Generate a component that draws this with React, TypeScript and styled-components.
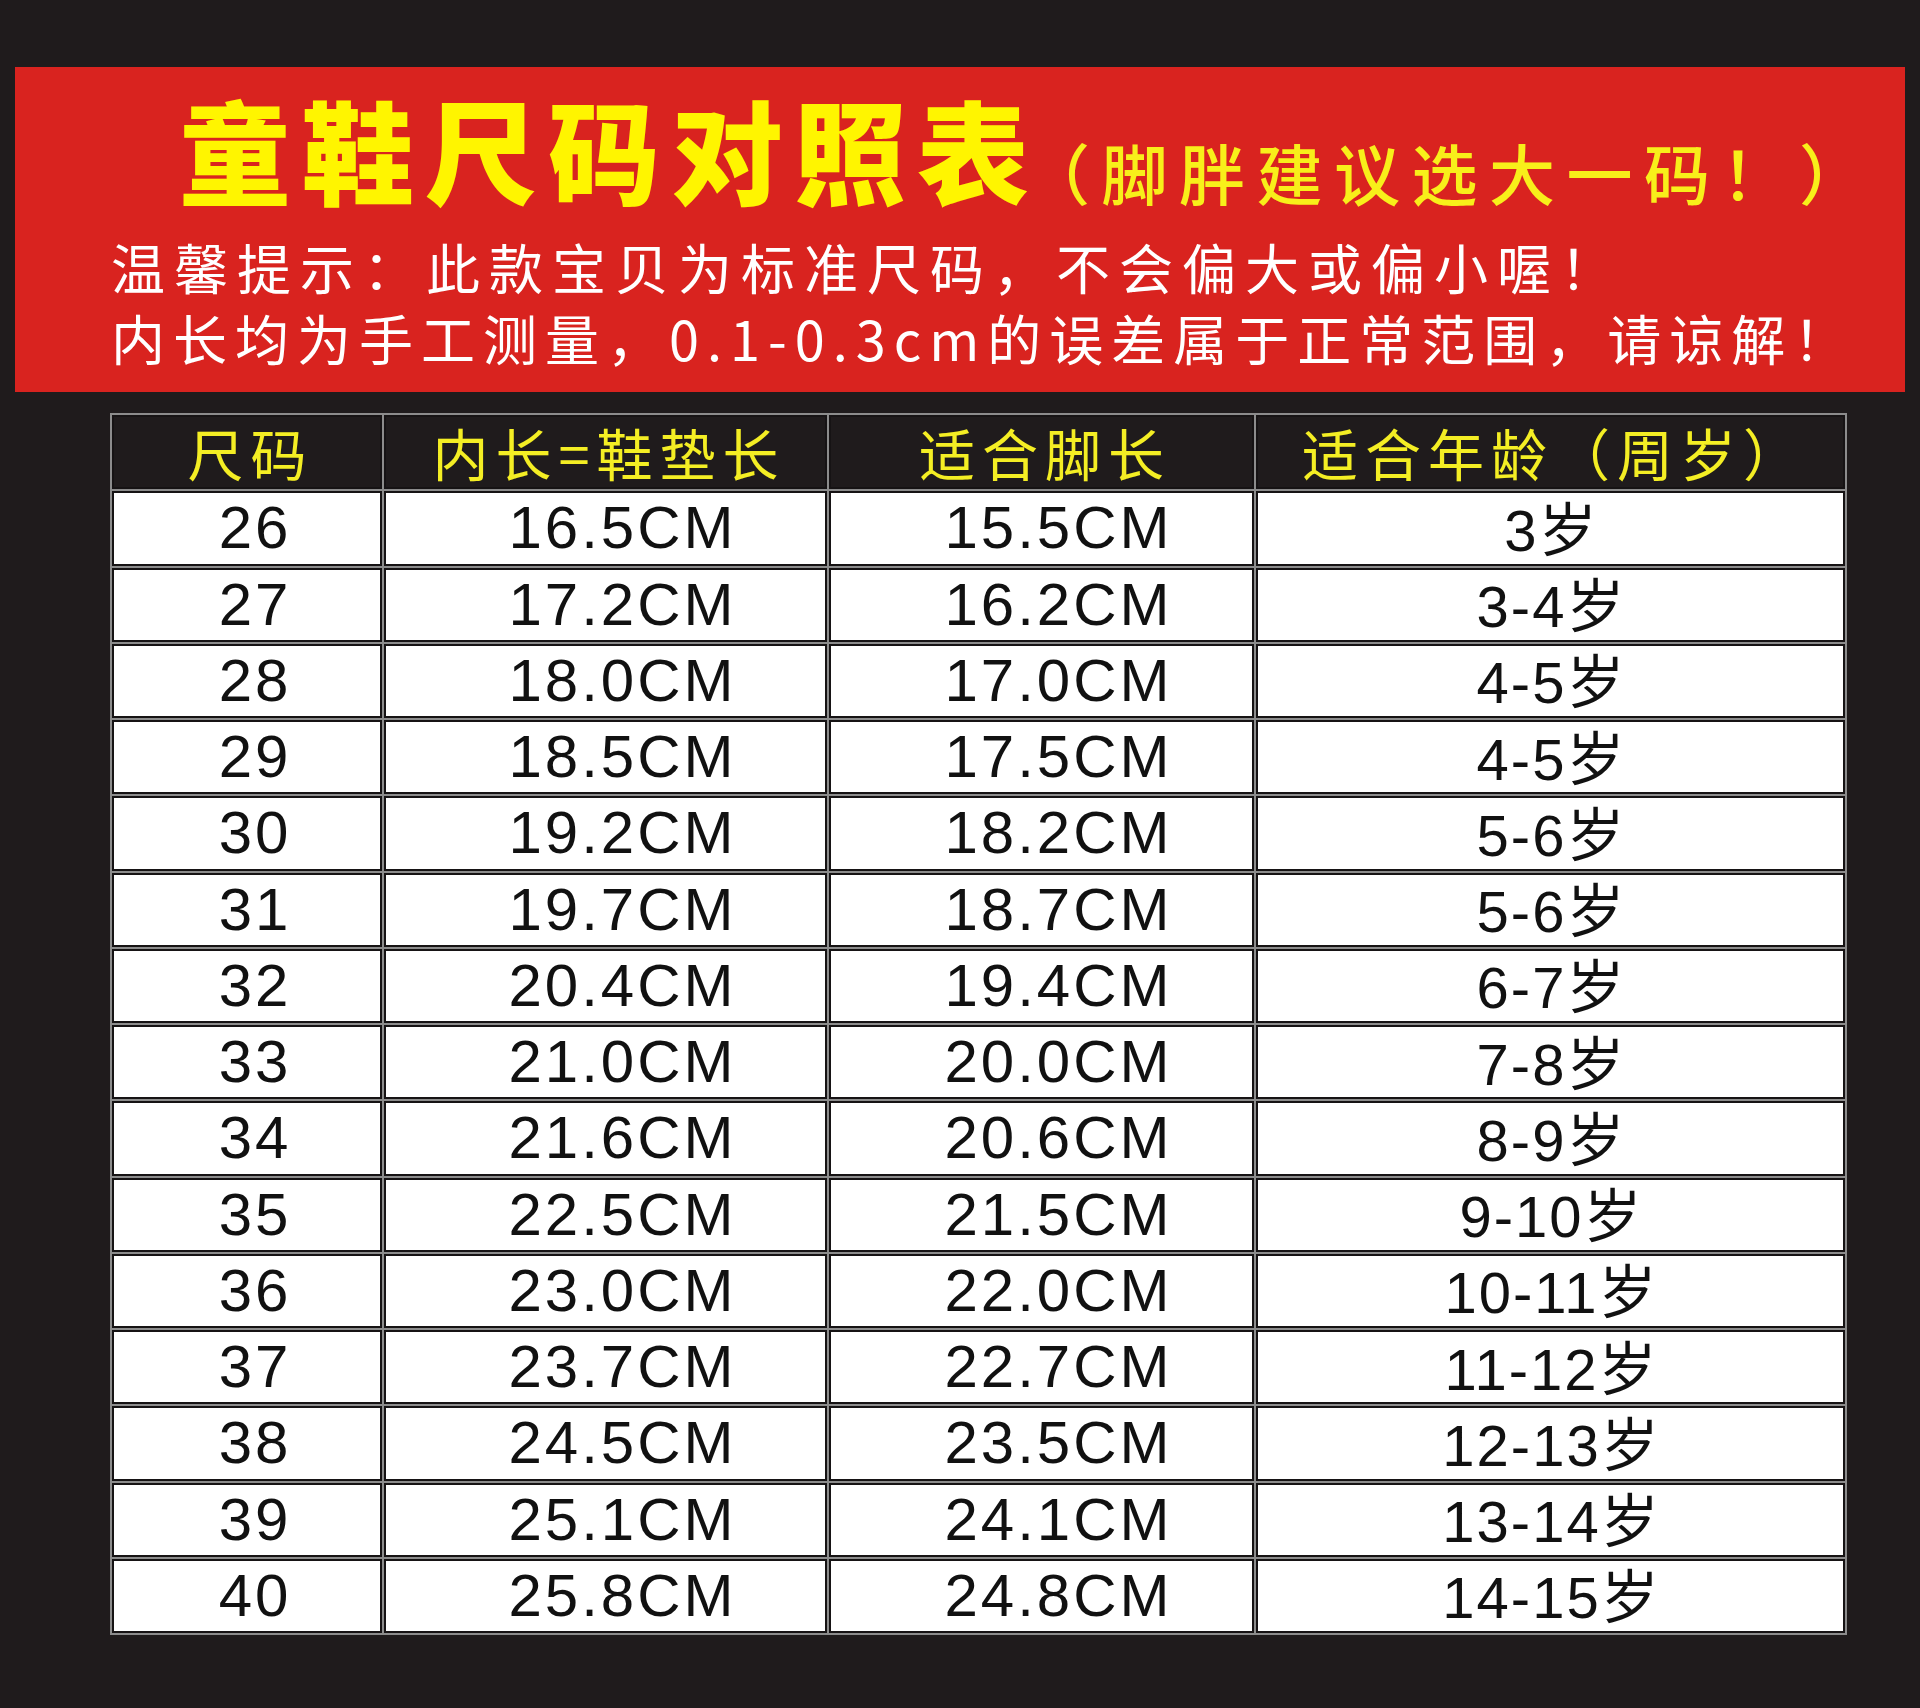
import React from "react";
import styled, { createGlobalStyle } from "styled-components";

const GlobalStyle = createGlobalStyle`
  html, body {
    margin: 0;
    padding: 0;
    background: #1f1b1c;
  }
  body {
    font-family: "Noto Sans CJK SC", "Noto Sans", sans-serif;
  }
`;

const Page = styled.div`
  width: 1920px;
  height: 1708px;
  box-sizing: border-box;
  padding-top: 67px;
  background: #1f1b1c;
  display: flex;
  flex-direction: column;
`;

const Banner = styled.section`
  margin: 0 15px;
  height: 325px;
  box-sizing: border-box;
  padding: 25px 0 0 96px;
  background: #d9231f;
`;

const TitleRow = styled.div`
  display: flex;
  align-items: flex-end;
  margin-left: 68px;
`;

const Title = styled.h1`
  margin: 0;
  font-size: 112px;
  line-height: 1;
  font-weight: 900;
  letter-spacing: 11px;
  color: #fff500;
`;

const Subtitle = styled.span`
  margin-left: -16px;
  font-size: 66px;
  line-height: 1;
  font-weight: 500;
  letter-spacing: 11.5px;
  color: #f8ef1a;
`;

const Notice = styled.div`
  margin-top: 27px;
`;

const NoticeLine = styled.p<{ $spacing: number }>`
  margin: 0;
  font-size: 54px;
  line-height: 71px;
  letter-spacing: ${(p) => p.$spacing}px;
  color: #ffffff;
  white-space: nowrap;
`;

const Table = styled.div`
  margin: 21px 0 0 110px;
  width: 1737px;
  box-sizing: border-box;
  display: grid;
  grid-template-columns: 270px 443px 425px 589px;
  grid-auto-rows: 74.25px;
  gap: 2px;
  padding: 2px;
  background: #8c8c8c;
`;

const Cell = styled.div<{ $head?: boolean }>`
  display: flex;
  align-items: center;
  justify-content: center;
  box-sizing: border-box;
  border: 2px solid #161314;
  background: ${(p) => (p.$head ? "#1f1b1c" : "#ffffff")};
  color: ${(p) => (p.$head ? "#f4ee24" : "#111111")};
  white-space: nowrap;
`;

const HeadText = styled.span`
  font-size: 56px;
  line-height: 1;
  letter-spacing: 7px;
  padding-left: 7px;
`;

const NumText = styled.span<{ $shift: number }>`
  font-family: "Liberation Sans", "Noto Sans CJK SC", sans-serif;
  font-size: 60px;
  line-height: 1;
  letter-spacing: 3px;
  padding-left: ${(p) => p.$shift}px;
`;

const AgeText = styled.span`
  font-family: "Liberation Sans", "Noto Sans CJK SC", sans-serif;
  font-size: 58px;
  line-height: 1;
  letter-spacing: 2px;
`;

const AgeUnit = styled.span`
  font-family: "Noto Sans CJK SC", sans-serif;
  letter-spacing: 0;
`;

const headers = ["尺码", "内长=鞋垫长", "适合脚长", "适合年龄（周岁）"];

const rows: Array<[string, string, string, string]> = [
  ["26", "16.5CM", "15.5CM", "3"],
  ["27", "17.2CM", "16.2CM", "3-4"],
  ["28", "18.0CM", "17.0CM", "4-5"],
  ["29", "18.5CM", "17.5CM", "4-5"],
  ["30", "19.2CM", "18.2CM", "5-6"],
  ["31", "19.7CM", "18.7CM", "5-6"],
  ["32", "20.4CM", "19.4CM", "6-7"],
  ["33", "21.0CM", "20.0CM", "7-8"],
  ["34", "21.6CM", "20.6CM", "8-9"],
  ["35", "22.5CM", "21.5CM", "9-10"],
  ["36", "23.0CM", "22.0CM", "10-11"],
  ["37", "23.7CM", "22.7CM", "11-12"],
  ["38", "24.5CM", "23.5CM", "12-13"],
  ["39", "25.1CM", "24.1CM", "13-14"],
  ["40", "25.8CM", "24.8CM", "14-15"],
];

const App = () => {
  return (
    <Page>
      <GlobalStyle />
      <Banner>
        <TitleRow>
          <Title>童鞋尺码对照表</Title>
          <Subtitle>（脚胖建议选大一码！）</Subtitle>
        </TitleRow>
        <Notice>
          <NoticeLine $spacing={9}>温馨提示：此款宝贝为标准尺码，不会偏大或偏小喔！</NoticeLine>
          <NoticeLine $spacing={8}>内长均为手工测量，0.1-0.3cm的误差属于正常范围，请谅解！</NoticeLine>
        </Notice>
      </Banner>
      <Table>
        {headers.map((h) => (
          <Cell $head key={h}>
            <HeadText>{h}</HeadText>
          </Cell>
        ))}
        {rows.map(([size, inner, foot, age]) => (
          <React.Fragment key={size}>
            <Cell>
              <NumText $shift={16}>{size}</NumText>
            </Cell>
            <Cell>
              <NumText $shift={34}>{inner}</NumText>
            </Cell>
            <Cell>
              <NumText $shift={34}>{foot}</NumText>
            </Cell>
            <Cell>
              <AgeText>
                {age}
                <AgeUnit>岁</AgeUnit>
              </AgeText>
            </Cell>
          </React.Fragment>
        ))}
      </Table>
    </Page>
  );
};

export default App;
